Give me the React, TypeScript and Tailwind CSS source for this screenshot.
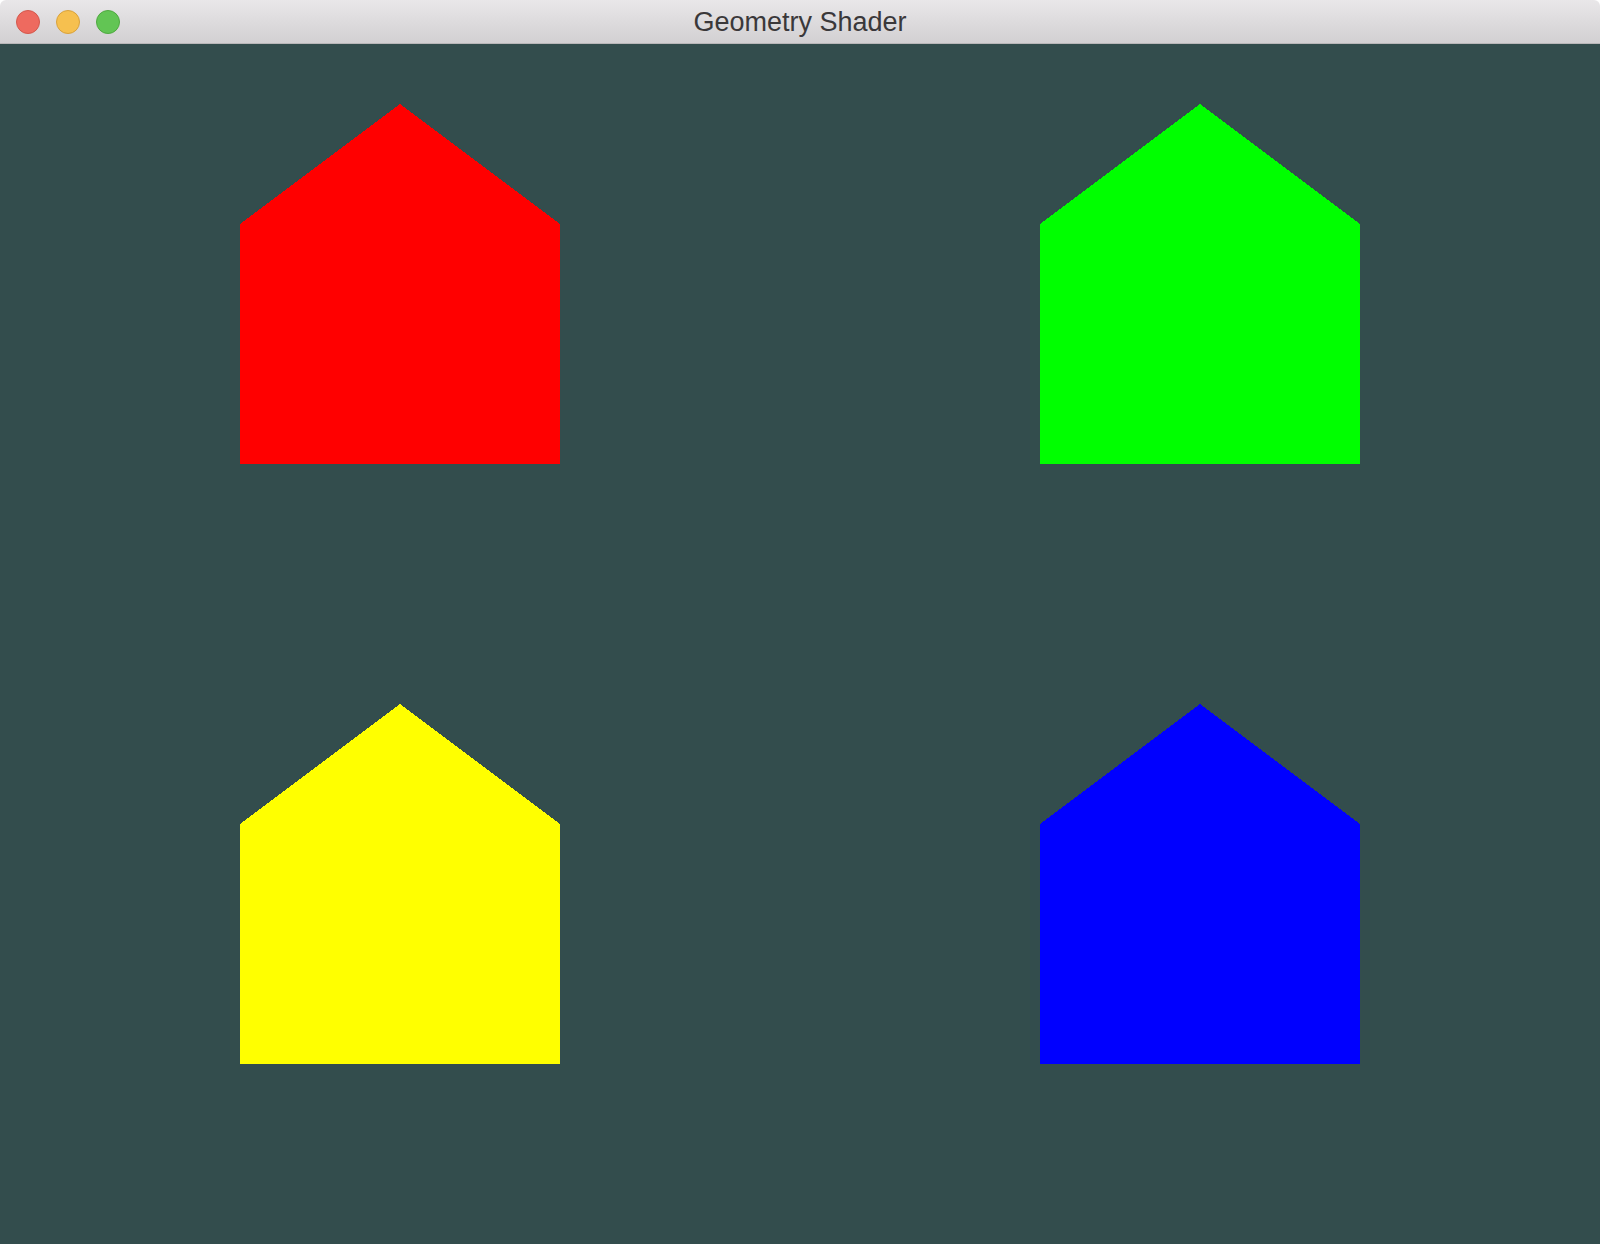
import React from "react";

function House({ color }: { color: string }) {
  return (
    <svg width="320" height="360" viewBox="0 0 320 360" className="block">
      <polygon points="0,120 160,0 320,120 320,360 0,360" fill={color} shapeRendering="crispEdges" />
    </svg>
  );
}

export default function App() {
  const colors = ["#ff0000", "#00ff00", "#ffff00", "#0000ff"];
  return (
    <div className="w-[1600px] h-[1244px] bg-white overflow-hidden" style={{ fontFamily: '"Liberation Sans", Arial, sans-serif' }}>
      <div className="w-full h-full flex flex-col rounded-t-[6px] overflow-hidden">
        <div className="relative h-[44px] flex items-center justify-center bg-gradient-to-b from-[#e9e7e9] to-[#d2d0d2] border-b border-[#b9b7b9]">
          <div className="absolute left-[16px] top-[10px] flex gap-[16px]">
            <div className="w-[24px] h-[24px] rounded-full bg-[#ee6a5f] border border-[#d4584c]" />
            <div className="w-[24px] h-[24px] rounded-full bg-[#f6c04f] border border-[#d9a23c]" />
            <div className="w-[24px] h-[24px] rounded-full bg-[#62c554] border border-[#4fa940]" />
          </div>
          <span className="text-[27px] text-[#3a383a] leading-none pt-[2px]">Geometry Shader</span>
        </div>
        <div className="flex-1 bg-[#334d4d] grid grid-cols-2 grid-rows-2">
          {colors.map((c) => (
            <div key={c} className="flex justify-center items-start pt-[60px]">
              <House color={c} />
            </div>
          ))}
        </div>
      </div>
    </div>
  );
}
